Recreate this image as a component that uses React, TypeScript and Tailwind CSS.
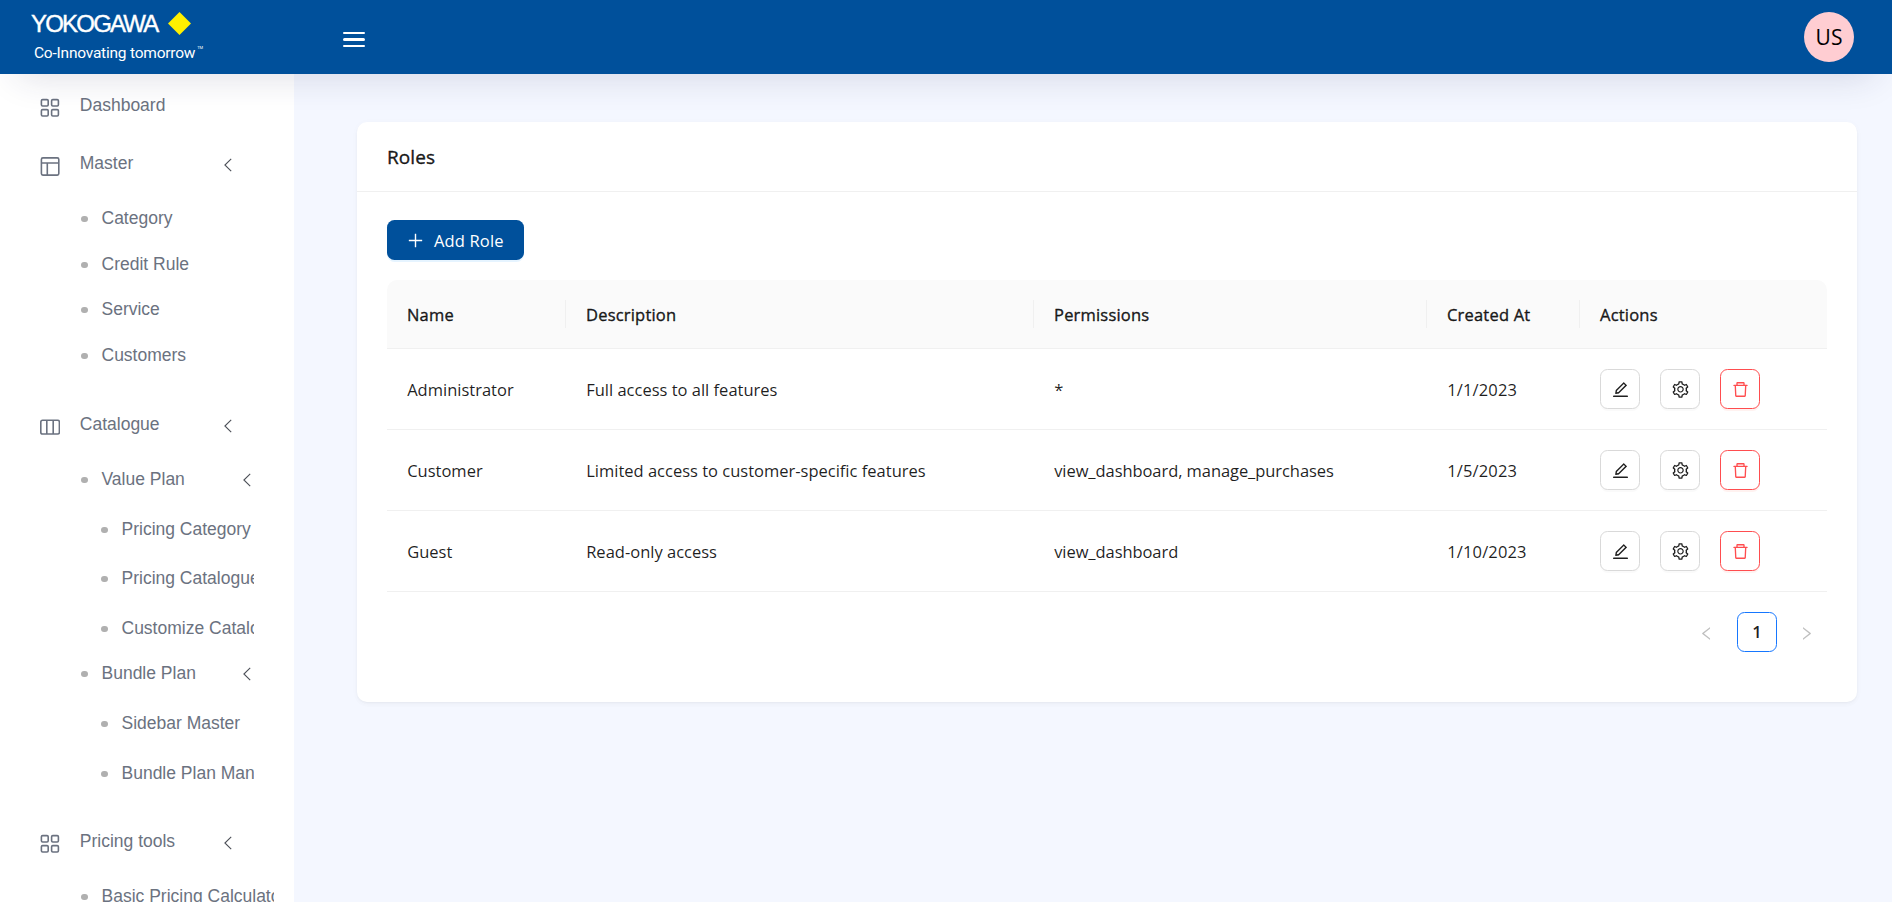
import { useState } from "react";
import {
  AiOutlineDelete,
  AiOutlineEdit,
  AiOutlineLeft,
  AiOutlinePlus,
  AiOutlineRight,
  AiOutlineSetting,
} from "react-icons/ai";

interface SubItem {
  label: string;
  children?: string[];
}

interface MenuItem {
  label: string;
  icon: "grid" | "layout" | "columns";
  children?: SubItem[];
}

interface Role {
  id: number;
  name: string;
  description: string;
  permissions: string[];
  createdAt: string;
}

const menu: MenuItem[] = [
  { label: "Dashboard", icon: "grid" },
  {
    label: "Master",
    icon: "layout",
    children: [
      { label: "Category" },
      { label: "Credit Rule" },
      { label: "Service" },
      { label: "Customers" },
    ],
  },
  {
    label: "Catalogue",
    icon: "columns",
    children: [
      {
        label: "Value Plan",
        children: ["Pricing Category", "Pricing Catalogue", "Customize Catalogue"],
      },
      {
        label: "Bundle Plan",
        children: ["Sidebar Master", "Bundle Plan Man"],
      },
    ],
  },
  {
    label: "Pricing tools",
    icon: "grid",
    children: [{ label: "Basic Pricing Calculator" }],
  },
];

const initialRoles: Role[] = [
  {
    id: 1,
    name: "Administrator",
    description: "Full access to all features",
    permissions: ["*"],
    createdAt: "1/1/2023",
  },
  {
    id: 2,
    name: "Customer",
    description: "Limited access to customer-specific features",
    permissions: ["view_dashboard", "manage_purchases"],
    createdAt: "1/5/2023",
  },
  {
    id: 3,
    name: "Guest",
    description: "Read-only access",
    permissions: ["view_dashboard"],
    createdAt: "1/10/2023",
  },
];

const columns = ["Name", "Description", "Permissions", "Created At", "Actions"];

function MenuIcon({ name }: { name: MenuItem["icon"] }) {
  return (
    <svg
      width="20"
      height="20"
      viewBox="0 0 20 20"
      fill="none"
      stroke="currentColor"
      strokeWidth="1.6"
      className="shrink-0"
    >
      {name === "grid" && (
        <>
          <rect x="1.4" y="1.6" width="6.8" height="6.4" rx="1.2" />
          <rect x="11.6" y="1.6" width="6.8" height="6.4" rx="1.2" />
          <rect x="1.4" y="11.6" width="6.8" height="6.4" rx="1.2" />
          <rect x="11.6" y="11.6" width="6.8" height="6.4" rx="1.2" />
        </>
      )}
      {name === "layout" && (
        <>
          <rect x="1.4" y="1.9" width="17.4" height="17.2" rx="1.5" />
          <path d="M1.4 7h17.4M7.3 7v12" />
        </>
      )}
      {name === "columns" && (
        <>
          <rect x="0.8" y="3.2" width="18.6" height="13.8" rx="1.8" />
          <path d="M6.8 3.2v13.8M13.2 3.2v13.8" />
        </>
      )}
    </svg>
  );
}

function Chevron() {
  return (
    <svg
      width="8"
      height="14"
      viewBox="0 0 8 14"
      fill="none"
      stroke="#4b4f57"
      strokeWidth="1.1"
      className="shrink-0"
    >
      <path d="M7.2 0.8L0.9 7l6.3 6.2" />
    </svg>
  );
}

function Dot() {
  return <span className="w-[7px] h-[6px] rounded-full bg-[#b0b0b0] shrink-0 mt-[2px]" />;
}

function Logo() {
  return (
    <div className="w-[200px] pl-[31px] pt-[10px] text-white">
      <div className="flex items-center h-[27px]">
        <span className="w-[137px] font-['Liberation_Sans',sans-serif] text-[24px] leading-[27px] tracking-[-1.8px] [-webkit-text-stroke:0.4px_white]">
          YOKOGAWA
        </span>
        <svg width="23" height="23" viewBox="0 0 23 23" className="shrink-0">
          <path d="M11.5 0L23 11.5 11.5 23 0 11.5z" fill="#fff000" />
        </svg>
      </div>
      <div className="flex pl-[3px] mt-[6px] whitespace-nowrap font-[Roboto,sans-serif] text-[15.5px] leading-[20px] tracking-[-0.22px]">
        Co-Innovating tomorrow
        <span className="text-[4px] leading-[10px] ml-[2px]">TM</span>
      </div>
    </div>
  );
}

function Sidebar() {
  return (
    <aside className="w-[294px] shrink-0 bg-white overflow-hidden pt-[2px] pl-10 text-[#6b7280] font-['Liberation_Sans',sans-serif] text-[17.5px] leading-6">
      {menu.map((item) => (
        <div key={item.label}>
          <div className="flex items-center h-[58px]">
            <div className="mt-[6px]">
              <MenuIcon name={item.icon} />
            </div>
            <span className="ml-[19.8px] w-[144.2px]">{item.label}</span>
            {item.children && (
              <div className="mt-[3px]">
                <Chevron />
              </div>
            )}
          </div>
          {item.children && (
            <ul className="pt-[3px] pb-[17px] pl-[41px] w-[234px] overflow-hidden whitespace-nowrap">
              {item.children.map((sub) => (
                <li key={sub.label}>
                  <div className="flex items-center h-[45.8px]">
                    <Dot />
                    <span className="ml-[13.5px] w-[141.5px]">{sub.label}</span>
                    {sub.children && (
                      <div className="mt-[2px]">
                        <Chevron />
                      </div>
                    )}
                  </div>
                  {sub.children && (
                    <ul className="mt-[2px] -mb-[2px] pl-5 w-[173px] overflow-hidden">
                      {sub.children.map((child) => (
                        <li key={child} className="flex items-center h-[49.5px]">
                          <Dot />
                          <span className="ml-[13.5px]">{child}</span>
                        </li>
                      ))}
                    </ul>
                  )}
                </li>
              ))}
            </ul>
          )}
        </div>
      ))}
    </aside>
  );
}

export default function App() {
  const [roles, setRoles] = useState<Role[]>(initialRoles);

  const handleDelete = (id: number) => {
    setRoles((prev) => prev.filter((role) => role.id !== id));
  };

  const actionButton =
    "flex items-center justify-center w-10 h-10 pl-[1px] pt-[1px] rounded-[7.5px] border bg-white text-[19px]";

  return (
    <div className="flex flex-col h-screen overflow-hidden bg-[#f4f7ff] font-['Open_Sans',sans-serif] text-[16.5px] text-black/88">
      {/* Top bar */}
      <header className="relative z-10 flex h-[74px] shrink-0 bg-[#00509b] shadow-[0_20px_36px_-18px_rgba(40,40,90,0.16)]">
        <Logo />
        <button className="ml-[143px] mt-[32px] w-[22px] h-[15px] flex flex-col justify-between">
          <span className="h-[2.4px] w-full rounded-full bg-white" />
          <span className="h-[2.4px] w-full rounded-full bg-white" />
          <span className="h-[2.4px] w-full rounded-full bg-white" />
        </button>
        <div className="ml-auto mr-[38px] mt-3 w-[50px] h-[50px] rounded-full bg-[#ffcdd2] text-black text-[21px] flex items-center justify-center pt-[1px]">
          US
        </div>
      </header>

      <div className="flex flex-1 min-h-0">
        <Sidebar />

        <main className="flex-1 pt-12 pl-[63px] pr-[35px]">
          <div className="h-[580px] rounded-[10px] bg-white shadow-[0_1px_2px_0_rgba(0,0,0,0.03),0_1px_8px_-1px_rgba(0,0,0,0.03),0_3px_5px_0_rgba(0,0,0,0.02)]">
            <div className="flex items-center h-[70px] px-[30px] pt-[1px] border-b border-[#f0f0f0] text-[19px] tracking-[0.1px] [-webkit-text-stroke:0.4px]">
              Roles
            </div>

            <div className="px-[30px] pt-7">
              <button className="flex items-center gap-[9px] h-10 w-[137px] pl-[19px] rounded-[7.5px] bg-[#00509b] text-white shadow-[0_2px_0_rgba(5,145,255,0.1)]">
                <AiOutlinePlus className="w-[19px] h-[19px] mt-[1px]" />
                <span className="pt-[3px] tracking-[0.15px]">Add Role</span>
              </button>

              <table className="mt-5 w-full table-fixed border-separate border-spacing-0 text-left">
                <colgroup>
                  <col className="w-[179px]" />
                  <col className="w-[468px]" />
                  <col className="w-[393px]" />
                  <col className="w-[153px]" />
                  <col />
                </colgroup>
                <thead>
                  <tr>
                    {columns.map((column) => (
                      <th
                        key={column}
                        className="h-[69px] p-0 bg-[#fafafa] border-b border-[#f0f0f0] font-normal tracking-[0.2px] [-webkit-text-stroke:0.4px] first:rounded-tl-[10px] last:rounded-tr-[10px] [&:last-child>div]:border-r-0"
                      >
                        <div className="flex items-center h-7 pt-[2px] pl-5 border-r border-[#f0f0f0]">
                          {column}
                        </div>
                      </th>
                    ))}
                  </tr>
                </thead>
                <tbody>
                  {roles.map((role) => (
                    <tr
                      key={role.id}
                      className="[&>td]:h-[81px] [&>td]:p-0 [&>td]:pl-[20.2px] [&>td]:pt-[2px] [&>td:last-child]:pt-0 [&>td:last-child]:pl-5 [&>td]:border-b [&>td]:border-[#f0f0f0]"
                    >
                      <td>{role.name}</td>
                      <td>{role.description}</td>
                      <td className="tracking-[-0.07px]">{role.permissions.join(", ")}</td>
                      <td className="tracking-[0.15px]">{role.createdAt}</td>
                      <td>
                        <div className="flex gap-5">
                          <button className={`${actionButton} border-[#d9d9d9] shadow-[0_2px_0_rgba(0,0,0,0.02)]`}>
                            <AiOutlineEdit />
                          </button>
                          <button className={`${actionButton} border-[#d9d9d9] shadow-[0_2px_0_rgba(0,0,0,0.02)]`}>
                            <AiOutlineSetting />
                          </button>
                          <button
                            onClick={() => handleDelete(role.id)}
                            className={`${actionButton} border-[#ff4d4f] text-[#ff4d4f] shadow-[0_2px_0_rgba(255,38,5,0.06)]`}
                          >
                            <AiOutlineDelete />
                          </button>
                        </div>
                      </td>
                    </tr>
                  ))}
                </tbody>
              </table>

              {/* Pagination */}
              <div className="flex justify-end gap-[10px] mt-5">
                <button className="flex items-center justify-center w-10 h-10 pr-[1px] pt-[2px] text-black/25">
                  <AiOutlineLeft className="w-[17px] h-[17px]" />
                </button>
                <button className="flex items-center justify-center w-10 h-10 pt-[1px] rounded-[7.5px] border border-[#1677ff] font-semibold">
                  1
                </button>
                <button className="flex items-center justify-center w-10 h-10 pr-[1px] pt-[2px] text-black/25">
                  <AiOutlineRight className="w-[17px] h-[17px]" />
                </button>
              </div>
            </div>
          </div>
        </main>
      </div>
    </div>
  );
}
